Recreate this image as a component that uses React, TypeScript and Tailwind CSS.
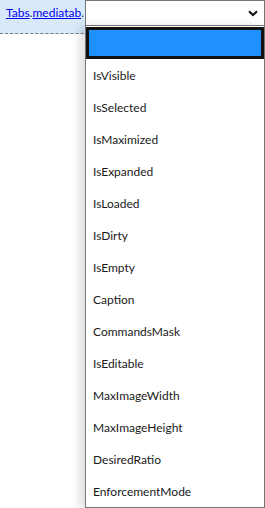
import React from "react";

const items = [
  "IsVisible",
  "IsSelected",
  "IsMaximized",
  "IsExpanded",
  "IsLoaded",
  "IsDirty",
  "IsEmpty",
  "Caption",
  "CommandsMask",
  "IsEditable",
  "MaxImageWidth",
  "MaxImageHeight",
  "DesiredRatio",
  "EnforcementMode",
];

export default function App() {
  return (
    <div
      className="relative w-[265px] h-[508px] bg-white overflow-hidden text-[12px] text-[#1a1a1a]"
      style={{ fontFamily: '"Segoe UI", Lato, "Noto Sans", sans-serif' }}
    >
      <div className="flex h-[34px] bg-[#d8e9fc] border-b border-dashed border-[#7a7a7a]">
        <div className="w-[85px] pl-[6px] pt-[5px] leading-[16px] whitespace-nowrap">
          <span className="text-[#0000ee] underline">Tabs</span>
          <span className="text-[#333]">.</span>
          <span className="text-[#0000ee] underline">mediatab</span>
          <span className="text-[#333]">.</span>
        </div>
        <div className="flex-1 h-[26px] bg-white border border-[#767676] flex items-center justify-end pr-[6px]">
          <svg width="10" height="7" viewBox="0 0 10 7">
            <path d="M1 1.2 L5 5 L9 1.2" fill="none" stroke="#111" strokeWidth="2" />
          </svg>
        </div>
      </div>
      <div className="absolute left-[85px] top-[26px] w-[180px] h-[482px] bg-white border-l border-r border-b border-[#767676] shadow-[-6px_0_8px_rgba(0,0,0,0.12)]">
        <div className="h-[32px] mt-[1px] bg-[#1e90ff] border-[3px] border-[#111]" />
        {items.map((t) => (
          <div key={t} className="h-[32px] flex items-center pl-[7px] pt-[2px]">
            {t}
          </div>
        ))}
      </div>
    </div>
  );
}
